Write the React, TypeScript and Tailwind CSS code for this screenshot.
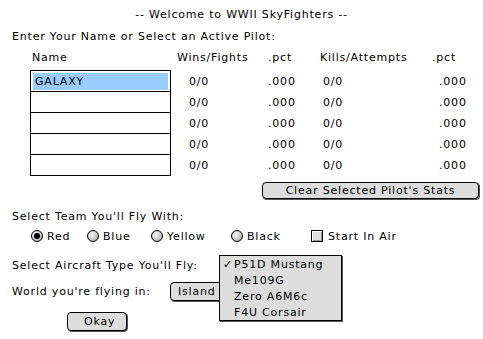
const rows = ["GALAXY", "", "", "", ""];

const Radio = ({ label, checked, className }: { label: string; checked?: boolean; className: string }) => (
  <div className={`flex items-center ${className}`}>
    <span className="w-[12px] h-[12px] rounded-full border border-black bg-[radial-gradient(circle_at_35%_35%,#ffffff,#bbbbbb_70%,#888888)] flex items-center justify-center">
      {checked && <span className="w-[6px] h-[6px] rounded-full bg-black" />}
    </span>
    <span className="ml-[4px]">{label}</span>
  </div>
);

const MacButton = ({ children, className }: { children: React.ReactNode; className: string }) => (
  <button className={`border border-black rounded-[4px] bg-[#dddddd] shadow-[1px_1px_0_#555555] flex items-center ${className}`}>
    {children}
  </button>
);

export default function App() {
  return (
    <div className="w-[483px] h-[339px] bg-white text-black text-[11px] tracking-[0.8px] leading-none relative overflow-hidden font-['DejaVu_Sans',sans-serif]">
      <div className="h-[28px] flex items-center justify-center">-- Welcome to WWII SkyFighters --</div>
      <div className="h-[16px] flex items-center pl-[12px]">Enter Your Name or Select an Active Pilot:</div>

      <div className="mt-[5px] h-[16px] flex items-center">
        <span className="ml-[32px] w-[145px]">Name</span>
        <span className="w-[91px]">Wins/Fights</span>
        <span className="w-[52px]">.pct</span>
        <span className="w-[112px]">Kills/Attempts</span>
        <span>.pct</span>
      </div>

      <div className="mt-[5px] flex">
        <div className="ml-[30px] w-[141px] border border-black border-b-0">
          {rows.map((name, i) => (
            <div key={i} className="h-[21px] border-b border-black flex items-center px-[2px]">
              {name && (
                <div className="w-full h-[17px] bg-[#99ccff] flex items-center pl-[2px]">{name}</div>
              )}
            </div>
          ))}
        </div>
        <div className="flex flex-col pt-[1px]">
          {rows.map((_, i) => (
            <div key={i} className="h-[21px] flex items-center">
              <span className="ml-[18px] w-[79px]">0/0</span>
              <span className="w-[55px]">.000</span>
              <span className="w-[116px]">0/0</span>
              <span>.000</span>
            </div>
          ))}
        </div>
      </div>

      <MacButton className="mt-[6px] ml-[262px] w-[217px] h-[17px] justify-center">Clear Selected Pilot's Stats</MacButton>

      <div className="mt-[9px] h-[16px] flex items-center pl-[12px]">Select Team You'll Fly With:</div>
      <div className="mt-[4px] h-[16px] flex items-center">
        <Radio label="Red" checked className="ml-[31px] w-[56px]" />
        <Radio label="Blue" className="w-[64px]" />
        <Radio label="Yellow" className="w-[80px]" />
        <Radio label="Black" className="w-[80px]" />
        <div className="flex items-center">
          <span className="w-[12px] h-[12px] border border-black bg-[#dddddd] shadow-[inset_1px_1px_0_#ffffff,inset_-1px_-1px_0_#999999]" />
          <span className="ml-[5px]">Start In Air</span>
        </div>
      </div>

      <div className="mt-[13px] h-[16px] flex items-center pl-[12px]">Select Aircraft Type You'll Fly:</div>
      <div className="mt-[9px] h-[19px] flex items-center">
        <span className="ml-[12px] w-[158px]">World you're flying in:</span>
        <MacButton className="w-[60px] h-[19px] pl-[7px]">Island</MacButton>
      </div>

      <MacButton className="mt-[11px] ml-[67px] w-[60px] h-[19px] pl-[16px]">Okay</MacButton>

      <div className="absolute left-[219px] top-[255px] w-[123px] border border-black bg-[#dddddd] shadow-[1px_1px_0_#555555]">
        {["P51D Mustang", "Me109G", "Zero A6M6c", "F4U Corsair"].map((item, i) => (
          <div key={item} className="h-[16px] flex items-center">
            <span className="w-[14px] pl-[3px]">{i === 0 ? "✓" : ""}</span>
            <span>{item}</span>
          </div>
        ))}
      </div>
    </div>
  );
}
